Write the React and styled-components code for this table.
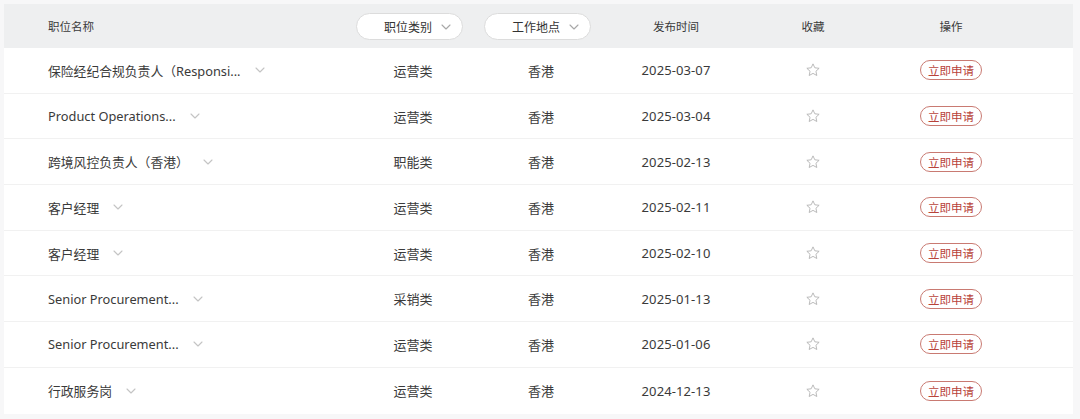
import styled, { createGlobalStyle } from "styled-components";

const GlobalStyle = createGlobalStyle`
  html, body {
    margin: 0;
    padding: 0;
    background: #f7f7f8;
  }
  body {
    font-family: "Noto Sans", "Noto Sans CJK SC", sans-serif;
    color: #3a3a3a;
  }
`;

const jobs = [
  { name: "保险经纪合规负责人（Responsi...", type: "运营类", city: "香港", date: "2025-03-07" },
  { name: "Product Operations...", type: "运营类", city: "香港", date: "2025-03-04" },
  { name: "跨境风控负责人（香港）", type: "职能类", city: "香港", date: "2025-02-13" },
  { name: "客户经理", type: "运营类", city: "香港", date: "2025-02-11" },
  { name: "客户经理", type: "运营类", city: "香港", date: "2025-02-10" },
  { name: "Senior Procurement...", type: "采销类", city: "香港", date: "2025-01-13" },
  { name: "Senior Procurement...", type: "运营类", city: "香港", date: "2025-01-06" },
  { name: "行政服务岗", type: "运营类", city: "香港", date: "2024-12-13" },
];

const columns = "345px 128px 128px 142px 132px 144px 1fr";

const Chevron = ({ color = "#c4c4c4" }) => (
  <svg width="10" height="6" viewBox="0 0 10 6" fill="none">
    <path d="M1 1l4 4 4-4" stroke={color} strokeWidth="1.1" strokeLinecap="round" strokeLinejoin="round" />
  </svg>
);

const Star = () => (
  <svg width="16" height="16" viewBox="0 0 24 24" fill="none">
    <path
      d="M12 2.8l2.75 5.9 6.45.75-4.78 4.42 1.28 6.38L12 17.05l-5.7 3.2 1.28-6.38L2.8 9.45l6.45-.75z"
      stroke="#b0b0b0"
      strokeWidth="1.3"
      strokeLinejoin="round"
    />
  </svg>
);

const App = () => {
  return (
    <Page>
      <GlobalStyle />
      <Table>
        <HeaderRow>
          <NameHead>职位名称</NameHead>
          <Cell>
            <FilterPill>
              <span>职位类别</span>
              <Chevron color="#a8a8a8" />
            </FilterPill>
          </Cell>
          <Cell>
            <FilterPill>
              <span>工作地点</span>
              <Chevron color="#a8a8a8" />
            </FilterPill>
          </Cell>
          <HeadCell>发布时间</HeadCell>
          <HeadCell>收藏</HeadCell>
          <HeadCell>操作</HeadCell>
          <Cell />
        </HeaderRow>
        {jobs.map((job, i) => (
          <Row key={i} $last={i === jobs.length - 1}>
            <NameCell>
              <JobName>{job.name}</JobName>
              <Chevron />
            </NameCell>
            <Cell>{job.type}</Cell>
            <Cell>{job.city}</Cell>
            <DateCell>{job.date}</DateCell>
            <Cell>
              <Star />
            </Cell>
            <Cell>
              <ApplyButton>立即申请</ApplyButton>
            </Cell>
            <Cell />
          </Row>
        ))}
      </Table>
    </Page>
  );
};

const Page = styled.div`
  width: 1080px;
  height: 419px;
  padding: 4px 7px 0 4px;
  box-sizing: border-box;
  background: #f7f7f8;
`;

const Table = styled.div`
  display: flex;
  flex-direction: column;
  background: #ffffff;
`;

const HeaderRow = styled.div`
  display: grid;
  grid-template-columns: ${columns};
  height: 44px;
  align-items: center;
  background: #eeeff0;
  font-size: 11.5px;
  color: #3a3a3a;
`;

const Row = styled.div`
  display: grid;
  grid-template-columns: ${columns};
  height: 45.7px;
  box-sizing: border-box;
  align-items: center;
  font-size: 13px;
  color: #3a3a3a;
  border-bottom: ${(p) => (p.$last ? "none" : "1px solid #f1f1f1")};
`;

const Cell = styled.div`
  display: flex;
  align-items: center;
  justify-content: center;
  height: 100%;
`;

const HeadCell = styled(Cell)`
  font-size: 11.5px;
`;

const NameHead = styled.div`
  padding-left: 44px;
`;

const NameCell = styled.div`
  display: flex;
  align-items: center;
  gap: 14px;
  padding-left: 44px;
  height: 100%;
`;

const JobName = styled.span`
  font-size: 12.8px;
  white-space: nowrap;
`;

const DateCell = styled(Cell)`
  font-size: 13px;
  letter-spacing: 0.1px;
`;

const FilterPill = styled.div`
  display: flex;
  align-items: center;
  justify-content: space-between;
  width: 107px;
  height: 27px;
  margin: 1px 7px 0 0;
  box-sizing: border-box;
  padding: 0 11px 0 27px;
  background: #ffffff;
  border: 1px solid #dcdcdc;
  border-radius: 14px;
  font-size: 12px;
  color: #333;
`;

const ApplyButton = styled.div`
  display: flex;
  align-items: center;
  justify-content: center;
  width: 62px;
  height: 20px;
  box-sizing: border-box;
  border: 1px solid #c97a72;
  border-radius: 11px;
  font-size: 11.5px;
  color: #b8433a;
`;

export default App;
